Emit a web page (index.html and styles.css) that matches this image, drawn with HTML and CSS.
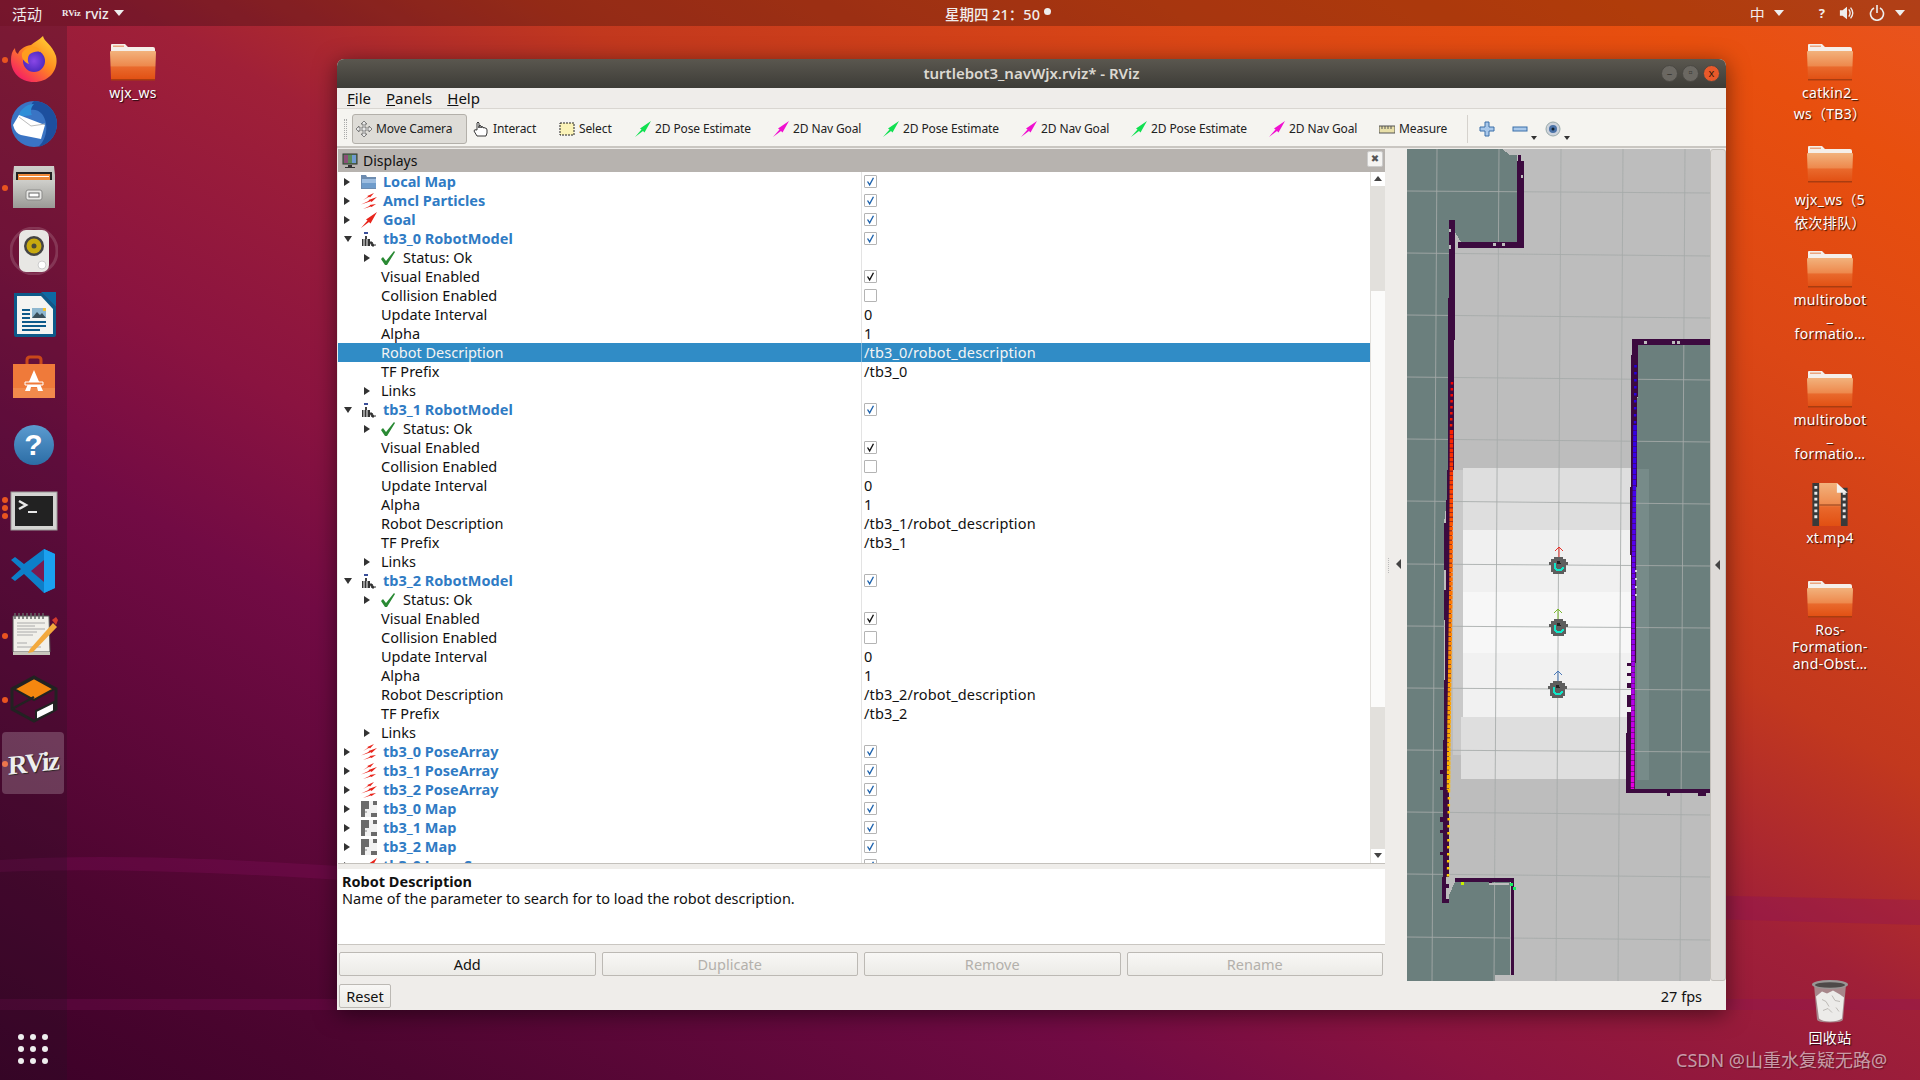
FILE: index.html
```html
<!DOCTYPE html>
<html lang="zh">
<head>
<meta charset="utf-8">
<title>turtlebot3_navWjx.rviz* - RViz</title>
<link rel="stylesheet" href="styles.css">
</head>
<body>
<svg class="defs" width="0" height="0">
  <defs>
    <linearGradient id="gFolder" x1="0" y1="0" x2="0" y2="1"><stop offset="0" stop-color="#f2b27c"/><stop offset=".5" stop-color="#ee8a4e"/><stop offset=".56" stop-color="#e9692c"/><stop offset="1" stop-color="#e14f12"/></linearGradient>
    <linearGradient id="gFire" x1="1" y1="0" x2=".2" y2="1"><stop offset="0" stop-color="#ffe03a"/><stop offset=".5" stop-color="#ff8a1f"/><stop offset="1" stop-color="#f5166a"/></linearGradient>
    <radialGradient id="gGlobe"><stop offset="0" stop-color="#8a47e6"/><stop offset="1" stop-color="#4f2ac0"/></radialGradient>
    <linearGradient id="gGrey" x1="0" y1="0" x2="0" y2="1"><stop offset="0" stop-color="#cfcfcb"/><stop offset="1" stop-color="#9a9a96"/></linearGradient>
    <linearGradient id="gLaserL" gradientUnits="userSpaceOnUse" x1="0" y1="382" x2="0" y2="877"><stop offset="0" stop-color="#f50000"/><stop offset=".3" stop-color="#ff5a00"/><stop offset=".6" stop-color="#ff9a00"/><stop offset="1" stop-color="#ffd500"/></linearGradient>
    <linearGradient id="gLaserR" gradientUnits="userSpaceOnUse" x1="0" y1="365" x2="0" y2="790"><stop offset="0" stop-color="#2000e0"/><stop offset=".4" stop-color="#5000f0"/><stop offset=".65" stop-color="#9500f0"/><stop offset="1" stop-color="#e800e0"/></linearGradient>

    <symbol id="i-folder" viewBox="0 0 46 38">
      <path d="M2 1h13l3 3h25q2 0 2 2v6H1V2q0-1 1-1z" fill="#f5efe9"/>
      <path d="M3 2.500h11v1.500H3z" fill="#eba57f"/>
      <path d="M1 8h44q1 0 1 1l-1 27q0 1-2 1H3q-2 0-2-1L0 9q0-1 1-1z" fill="url(#gFolder)"/>
      <path d="M1 36h44v1.500H1z" fill="#a93c10"/>
    </symbol>
    <symbol id="i-video" viewBox="0 0 36 46">
      <path d="M0 1h7v44H0zM29 6h7v39h-7z" fill="#3a3a3a"/>
      <path d="M7 1h18l4 5v39H7z" fill="url(#gFolder)"/>
      <path d="M25 1l11 10h-11z" fill="#f5f2ee"/>
      <path d="M7 23h22v1H7z" fill="#8c3d18"/>
      <path d="M2 4h3v3H2zm0 6h3v3H2zm0 6h3v3H2zm0 6h3v3H2zm0 6h3v3H2zm0 6h3v3H2zm29-24h3v3h-3zm0 6h3v3h-3zm0 6h3v3h-3zm0 6h3v3h-3zm0 6h3v3h-3z" fill="#e8e8e8"/>
    </symbol>
    <symbol id="i-trash" viewBox="0 0 36 44">
      <path d="M2 5l3 35q0 3 13 3t13-3l3-35z" fill="#a9a09f" opacity=".8"/>
      <path d="M4 17l6-5 5 2 6-3 7 4 4 3-2 21q-4 3-12 3t-11-3z" fill="#ecebe9"/>
      <path d="M10 20l4 2 3 5M20 16l3 5 5 1M11 31l5-2 4 4M24 28l3 4" stroke="#bdbab6" fill="none"/>
      <ellipse cx="18" cy="5" rx="18" ry="4.500" fill="#9a9695"/>
      <ellipse cx="18" cy="5.500" rx="15" ry="2.800" fill="#4e4948"/>
    </symbol>
    <symbol id="t-arrow" viewBox="0 0 16 16"><path d="M0 16L6.500 8.500 5 7.500 16 0 9.500 11.500 8 10z" fill="currentColor"/></symbol>
    <symbol id="t-particles" viewBox="0 0 16 16">
      <path d="M2 7L7 3.800 6.300 3 13 0 9 4.500 8.300 3.800zM0 11.500L8 7.800 7.500 7 16 4 10.500 9 9.800 8.300zM2 16L9 12.800 8.500 12 15 11 10.500 14 9.800 13.400z" fill="#e8251c"/>
    </symbol>
    <symbol id="t-dfolder" viewBox="0 0 16 16">
      <path d="M0 1h5l1 2h9v12H0z" fill="#6d8cb0"/><path d="M1 5h14v9H1z" fill="#9dbde0"/><path d="M1 9h14v5H1z" fill="#6f9ccb"/>
    </symbol>
    <symbol id="t-robot" viewBox="0 0 16 16">
      <path d="M3 1h4v2H3z" fill="#3a4f9a"/><path d="M4 5h2v3H4z" fill="#444"/><path d="M1 8h8v7H1z" fill="#333"/><path d="M3 8v7M6 8v7" stroke="#fff"/><path d="M9 11h2l2 4h-2zM12 14h3" stroke="#333" fill="#333"/>
    </symbol>
    <symbol id="t-map" viewBox="0 0 16 16">
      <path d="M0 0h16v16H0z" fill="#f2f2f2"/>
      <path d="M0 0h4v16H0zM4 0h4v8H4zM12 0h4v4h-4zM10 12h6v4h-6z" fill="#6b6b6b"/>
      <path d="M4 10h2v2H4z" fill="#bbb"/>
    </symbol>
    <symbol id="t-check" viewBox="0 0 16 16"><path d="M1 9l2-2 3 4 8-10 1 1-8 13h-2z" fill="#2a8a34"/></symbol>
    <symbol id="t-tick" viewBox="0 0 13 13"><path d="M3 6.500l2.500 4L10 2" fill="none" stroke="currentColor" stroke-width="1.600"/></symbol>
    <symbol id="t-robotmap" viewBox="0 0 19 18">
      <path d="M2 3h3V1h9v2h3v3h2v3h-2v7h-2v2H4v-2H2V9H0V6h2z" fill="#5e5e5e"/>
      <path d="M6 7v4q0 3 4 3t4-3" fill="none" stroke="#0fe6c8" stroke-width="2"/>
      <path d="M8 5h3l1 3H8z" fill="#222"/>
    </symbol>
  </defs>
</svg>

<div class="topbar">
  <div class="tb-left">
    <span class="tb-act">活动</span>
    <span class="tb-mini">RViz</span>
    <span class="tb-app">rviz</span>
    <i class="caret"></i>
  </div>
  <div class="tb-clock">星期四 21：50<i class="clock-dot"></i></div>
  <div class="tb-right">
    <span class="tb-ime">中</span><i class="caret"></i>
    <span class="tb-help">?</span>
    <svg class="tb-ico" viewBox="0 0 18 16"><path d="M1 5h3l5-4v14l-5-4H1z" fill="#eee"/><path d="M11 4q3 4 0 8M13 2q5 6 0 12" fill="none" stroke="#eee" stroke-width="1.500"/></svg>
    <svg class="tb-ico last" viewBox="0 0 16 16"><path d="M5 3a6.500 6.500 0 1 0 6 0" fill="none" stroke="#eee" stroke-width="1.600"/><path d="M8 0v8" stroke="#eee" stroke-width="1.600"/></svg>
    <i class="caret"></i>
  </div>
</div>

<nav class="dock">
  <div class="slot run"><svg class="app" viewBox="0 0 48 48"><path d="M33 1c1 6 9 8 13 20 3 13-6 26-22 26C10 47 1 37 1 25c0-5 1-9 4-12 0 3 1 5 3 6 1-4 6-8 13-9 3-3 8-5 12-9z" fill="url(#gFire)"/><circle cx="24" cy="26" r="11" fill="url(#gGlobe)"/><path d="M12 18c3-5 10-8 16-5 2 1 3 3 2 4-3-1-7 0-10 2-2 2-3 6-1 10-5-2-8-6-7-11z" fill="#ff9d1e"/></svg></div>
  <div class="slot"><svg class="app" viewBox="0 0 48 48"><circle cx="24" cy="25" r="23" fill="#3a74c4"/><path d="M24 2a23 23 0 0 1 23 23c0 12-9 21-19 23 8-6 12-22 4-33-3-4-8-5-12-4 1-5 2-8 4-9z" fill="#1d4f9e"/><path d="M8 18c2-7 8-13 16-13-3 3-4 8-2 11z" fill="#2f8fd8"/><path d="M3 26l6-10 26 10-4 14-20-4q-6-2-8-10z" fill="#fff"/><path d="M9 18l12 9 14-2" fill="none" stroke="#bbb"/></svg></div>
  <div class="slot run"><svg class="app" viewBox="0 0 48 48"><path d="M4 3h40l1 9v33H3V12z" fill="url(#gGrey)"/><path d="M6 9h36v8H6z" fill="#222"/><path d="M8 11h32v6H8z" fill="#ee8a3a"/><path d="M9 13h30v1H9z" fill="#fff"/><path d="M3 17h42v28H3z" fill="url(#gGrey)"/><rect x="16" y="27" width="16" height="10" rx="2" fill="#e8e8e6" stroke="#8a8a88"/><rect x="19" y="30" width="10" height="4" fill="#fff" stroke="#666"/></svg></div>
  <div class="slot"><svg class="app" viewBox="0 0 48 48"><circle cx="24" cy="24" r="23" fill="none" stroke="#fff" stroke-opacity=".15" stroke-width="3"/><rect x="9" y="3" width="30" height="42" rx="7" fill="#e8e7e4"/><circle cx="24" cy="19" r="10" fill="#444"/><circle cx="24" cy="19" r="7.500" fill="#c7a90f"/><circle cx="24" cy="19" r="2.500" fill="#4a4a3a"/><circle cx="32" cy="38" r="4" fill="#fff" stroke="#ccc"/></svg></div>
  <div class="slot"><svg class="app" viewBox="0 0 48 48"><path d="M4 2h28l14 14v28q0 2-2 2H6q-2 0-2-2z" fill="#0d5a8a"/><path d="M31 1h15v15z" fill="#0d6aa3"/><path d="M7 5h24l12 13v25H7z" fill="#f4f4f2"/><path d="M12 18h8v2h-8zm0 4h8v2h-8zm0 4h8v2h-8zm0 4h24v2H12zm0 4h24v2H12zm0 4h18v2H12z" fill="#0d5a8a"/><path d="M22 17h14v10H22z" fill="#8fb7cf"/><path d="M22 27l5-6 3 3 2-2 4 5z" fill="#3a4f5a"/><path d="M33 17h3v3h-3z" fill="#f0c030"/></svg></div>
  <div class="slot"><svg class="app" viewBox="0 0 48 48"><path d="M17 11V5q0-3 3-3h8q3 0 3 3v6" fill="none" stroke="#c9481a" stroke-width="3"/><path d="M3 9h42v34H3z" fill="#ef7a3a"/><path d="M3 33h42v10H3z" fill="#f28a4c"/><path d="M24 15l9 21h-5l-1-4h-6l-1 4h-5z" fill="#fff"/><path d="M15 27h18v3H15z" fill="#ef7a3a" stroke="#fff"/></svg></div>
  <div class="slot"><div class="help-ball">?</div></div>
  <div class="slot run3"><svg class="app" viewBox="0 -6 48 48"><rect x="1" y="3" width="46" height="38" fill="#d4d4d2" stroke="#9a9a98"/><rect x="5" y="7" width="38" height="30" fill="#222"/><path d="M9 12l7 4-7 4" fill="none" stroke="#e8e8e8" stroke-width="2.500"/><path d="M18 22h9v2h-9z" fill="#e8e8e8"/></svg></div>
  <div class="slot"><svg class="app" viewBox="0 0 48 48"><path d="M34 2l11 5v34l-11 5-20-19-9 7-4-3 10-9L1 13l4-3 9 7z" fill="#0d7fc9"/><path d="M34 2l11 5v34l-11 5z" fill="#1ba1f0"/><path d="M34 13v22l-13-11z" fill="#7a1a50"/></svg></div>
  <div class="slot run"><svg class="app" viewBox="0 0 48 48"><path d="M3 5h36l1 36H3z" fill="#f1f0ea" stroke="#555"/><path d="M3 41h37v3H3z" fill="#c8c6bc"/><path d="M5 2v6m4-6v6m4-6v6m4-6v6m4-6v6m4-6v6m4-6v6m4-6v6" stroke="#666" stroke-width="1.500"/><path d="M7 12h28M7 15h18M7 18h28M7 21h20M7 24h16M7 32h10M7 36h24" stroke="#aaa" stroke-width="1"/><path d="M20 38l23-26 4 4-24 25-5 1z" fill="#f2a93c"/><path d="M42 9l4-3 2 3-2 5z" fill="#d23a2e"/></svg></div>
  <div class="slot run"><svg class="app" viewBox="0 0 48 48"><path d="M24 2L46 14v20L24 46 2 34V14z" fill="none" stroke="#222" stroke-width="3"/><path d="M24 3l20 11-20 11L4 14z" fill="#f5870f" stroke="#222" stroke-width="2"/><path d="M2 34l22-12" stroke="#222" stroke-width="2.500"/><path d="M26 36l18-9v9l-18 9z" fill="#fff" stroke="#222" stroke-width="2"/></svg></div>
  <div class="slot run active"><span class="rviz-logo">RViz</span></div>
  <div class="apps"><i></i><i></i><i></i><i></i><i></i><i></i><i></i><i></i><i></i></div>
</nav>

<svg class="waves" viewBox="0 0 1920 1080" aria-hidden="true">
  <path d="M0 860Q120 852 340 866L1920 900V925L340 880Q120 866 0 872z" fill="#8a1060" opacity=".28"/>
  <path d="M0 999h1920v11H0z" fill="#8a1060" opacity=".25"/>
</svg>

<div class="ficon d-wjx"><svg class="fold"><use href="#i-folder"/></svg><span>wjx_ws</span></div>
<div class="ficon d-cat"><svg class="fold"><use href="#i-folder"/></svg><span>catkin2_<br>ws（TB3）</span></div>
<div class="ficon d-wjx5"><svg class="fold"><use href="#i-folder"/></svg><span>wjx_ws（5<br>依次排队）</span></div>
<div class="ficon d-multi1"><svg class="fold"><use href="#i-folder"/></svg><span class="tight">multirobot<br>_<br>formatio…</span></div>
<div class="ficon d-multi2"><svg class="fold"><use href="#i-folder"/></svg><span class="tight">multirobot<br>_<br>formatio…</span></div>
<div class="ficon d-xt"><svg class="vid"><use href="#i-video"/></svg><span>xt.mp4</span></div>
<div class="ficon d-ros"><svg class="fold"><use href="#i-folder"/></svg><span class="tight">Ros-<br>Formation-<br>and-Obst…</span></div>
<div class="ficon d-trash"><svg class="vid"><use href="#i-trash"/></svg><span>回收站</span></div>
<div class="watermark">CSDN @山重水复疑无路@</div>

<main class="win">
  <header class="titlebar">
    <span class="title">turtlebot3_navWjx.rviz* - RViz</span>
    <div class="wbtns"><i class="wb">–</i><i class="wb">▫</i><i class="wb close">x</i></div>
  </header>
  <div class="menubar"><span><u>F</u>ile</span><span><u>P</u>anels</span><span><u>H</u>elp</span></div>
  <div class="toolbar">
    <i class="grip"></i>
    <div class="tool pressed"><svg class="tico" viewBox="0 0 16 16"><path d="M8 0l3 3H9v4h4V5l3 3-3 3V9H9v4h2l-3 3-3-3h2V9H3v2L0 8l3-3v2h4V3H5z" fill="#e8e8e8" stroke="#666" stroke-width=".8"/></svg><span class="w-move">Move Camera</span></div>
    <div class="tool"><svg class="tico" viewBox="0 0 16 16"><path d="M4 9V2q1-2 2 0v5V5q1-1.500 2 0v2-1q1-1 2 0v1q1-1 2 0q2 0 2 2v3l-1 3H4L1 10q0-2 3-1z" fill="#fff" stroke="#222" stroke-width=".9"/></svg><span class="w-interact">Interact</span></div>
    <div class="tool"><svg class="tico" viewBox="0 0 16 16"><rect x="1" y="2" width="14" height="12" fill="#fbf3b8" stroke="#222" stroke-dasharray="2 1"/></svg><span class="w-select">Select</span></div>
    <div class="tool green"><svg class="tico"><use href="#t-arrow"/></svg><span class="w-pose">2D Pose Estimate</span></div>
    <div class="tool pink"><svg class="tico"><use href="#t-arrow"/></svg><span class="w-nav">2D Nav Goal</span></div>
    <div class="tool green"><svg class="tico"><use href="#t-arrow"/></svg><span class="w-pose">2D Pose Estimate</span></div>
    <div class="tool pink"><svg class="tico"><use href="#t-arrow"/></svg><span class="w-nav">2D Nav Goal</span></div>
    <div class="tool green"><svg class="tico"><use href="#t-arrow"/></svg><span class="w-pose">2D Pose Estimate</span></div>
    <div class="tool pink"><svg class="tico"><use href="#t-arrow"/></svg><span class="w-nav">2D Nav Goal</span></div>
    <div class="tool"><svg class="tico" viewBox="0 0 16 16"><rect y="5" width="16" height="7" fill="#e8dfa8" stroke="#555"/><path d="M3 5v3M6 5v3M9 5v3M12 5v3" stroke="#555"/></svg><span class="w-measure">Measure</span></div>
    <i class="tsep"></i>
    <div class="tbtn"><svg class="tico" viewBox="0 0 16 16"><path d="M6 1h4v5h5v4h-5v5H6v-5H1V6h5z" fill="#a9c8ea" stroke="#3a6ea8"/></svg></div>
    <div class="tbtn drop"><svg class="tico" viewBox="0 0 16 16"><rect x="1" y="6" width="14" height="4" fill="#a9c8ea" stroke="#3a6ea8"/></svg></div>
    <div class="tbtn drop"><svg class="tico" viewBox="0 0 16 16"><circle cx="8" cy="8" r="7" fill="#cdd3dc" stroke="#9aa"/><circle cx="8" cy="8" r="4" fill="#4b73a8"/><circle cx="8" cy="8" r="1.500" fill="#123"/></svg></div>
  </div>

  <div class="main">
    <section class="left">
      <div class="phead"><svg class="mon" viewBox="0 0 16 16"><rect x="1" y="1" width="14" height="10" fill="#5b8a5a" stroke="#333"/><path d="M2 2h4v8H2z" fill="#8d4f7a"/><path d="M10 2h4v8h-4z" fill="#6f9ad0"/><path d="M6 12h4v2h3v1H3v-1h3z" fill="#333"/></svg><span>Displays</span><b class="pclose">✖</b></div>
      <div class="treewrap">
        <div class="tree">
          <div class="row"><div class="nm"><i class="tw"></i><svg class="ic"><use href="#t-dfolder"/></svg><span class="disp">Local Map</span></div><div class="val"><i class="cb blue"><svg><use href="#t-tick"/></svg></i></div></div>
          <div class="row"><div class="nm"><i class="tw"></i><svg class="ic"><use href="#t-particles"/></svg><span class="disp">Amcl Particles</span></div><div class="val"><i class="cb blue"><svg><use href="#t-tick"/></svg></i></div></div>
          <div class="row"><div class="nm"><i class="tw"></i><svg class="ic red"><use href="#t-arrow"/></svg><span class="disp">Goal</span></div><div class="val"><i class="cb blue"><svg><use href="#t-tick"/></svg></i></div></div>

          <div class="row"><div class="nm"><i class="tw open"></i><svg class="ic"><use href="#t-robot"/></svg><span class="disp">tb3_0 RobotModel</span></div><div class="val"><i class="cb blue"><svg><use href="#t-tick"/></svg></i></div></div>
          <div class="row"><div class="nm sub"><i class="tw"></i><svg class="ic ck"><use href="#t-check"/></svg><span class="stat">Status: Ok</span></div><div class="val"></div></div>
          <div class="row"><div class="nm leaf">Visual Enabled</div><div class="val"><i class="cb"><svg><use href="#t-tick"/></svg></i></div></div>
          <div class="row"><div class="nm leaf">Collision Enabled</div><div class="val"><i class="cb"></i></div></div>
          <div class="row"><div class="nm leaf">Update Interval</div><div class="val">0</div></div>
          <div class="row"><div class="nm leaf">Alpha</div><div class="val">1</div></div>
          <div class="row sel"><div class="nm leaf">Robot Description</div><div class="val">/tb3_0/robot_description</div></div>
          <div class="row"><div class="nm leaf">TF Prefix</div><div class="val">/tb3_0</div></div>
          <div class="row"><div class="nm sub"><i class="tw"></i><span class="lnk">Links</span></div><div class="val"></div></div>

          <div class="row"><div class="nm"><i class="tw open"></i><svg class="ic"><use href="#t-robot"/></svg><span class="disp">tb3_1 RobotModel</span></div><div class="val"><i class="cb blue"><svg><use href="#t-tick"/></svg></i></div></div>
          <div class="row"><div class="nm sub"><i class="tw"></i><svg class="ic ck"><use href="#t-check"/></svg><span class="stat">Status: Ok</span></div><div class="val"></div></div>
          <div class="row"><div class="nm leaf">Visual Enabled</div><div class="val"><i class="cb"><svg><use href="#t-tick"/></svg></i></div></div>
          <div class="row"><div class="nm leaf">Collision Enabled</div><div class="val"><i class="cb"></i></div></div>
          <div class="row"><div class="nm leaf">Update Interval</div><div class="val">0</div></div>
          <div class="row"><div class="nm leaf">Alpha</div><div class="val">1</div></div>
          <div class="row"><div class="nm leaf">Robot Description</div><div class="val">/tb3_1/robot_description</div></div>
          <div class="row"><div class="nm leaf">TF Prefix</div><div class="val">/tb3_1</div></div>
          <div class="row"><div class="nm sub"><i class="tw"></i><span class="lnk">Links</span></div><div class="val"></div></div>

          <div class="row"><div class="nm"><i class="tw open"></i><svg class="ic"><use href="#t-robot"/></svg><span class="disp">tb3_2 RobotModel</span></div><div class="val"><i class="cb blue"><svg><use href="#t-tick"/></svg></i></div></div>
          <div class="row"><div class="nm sub"><i class="tw"></i><svg class="ic ck"><use href="#t-check"/></svg><span class="stat">Status: Ok</span></div><div class="val"></div></div>
          <div class="row"><div class="nm leaf">Visual Enabled</div><div class="val"><i class="cb"><svg><use href="#t-tick"/></svg></i></div></div>
          <div class="row"><div class="nm leaf">Collision Enabled</div><div class="val"><i class="cb"></i></div></div>
          <div class="row"><div class="nm leaf">Update Interval</div><div class="val">0</div></div>
          <div class="row"><div class="nm leaf">Alpha</div><div class="val">1</div></div>
          <div class="row"><div class="nm leaf">Robot Description</div><div class="val">/tb3_2/robot_description</div></div>
          <div class="row"><div class="nm leaf">TF Prefix</div><div class="val">/tb3_2</div></div>
          <div class="row"><div class="nm sub"><i class="tw"></i><span class="lnk">Links</span></div><div class="val"></div></div>

          <div class="row"><div class="nm"><i class="tw"></i><svg class="ic"><use href="#t-particles"/></svg><span class="disp">tb3_0 PoseArray</span></div><div class="val"><i class="cb blue"><svg><use href="#t-tick"/></svg></i></div></div>
          <div class="row"><div class="nm"><i class="tw"></i><svg class="ic"><use href="#t-particles"/></svg><span class="disp">tb3_1 PoseArray</span></div><div class="val"><i class="cb blue"><svg><use href="#t-tick"/></svg></i></div></div>
          <div class="row"><div class="nm"><i class="tw"></i><svg class="ic"><use href="#t-particles"/></svg><span class="disp">tb3_2 PoseArray</span></div><div class="val"><i class="cb blue"><svg><use href="#t-tick"/></svg></i></div></div>
          <div class="row"><div class="nm"><i class="tw"></i><svg class="ic"><use href="#t-map"/></svg><span class="disp">tb3_0 Map</span></div><div class="val"><i class="cb blue"><svg><use href="#t-tick"/></svg></i></div></div>
          <div class="row"><div class="nm"><i class="tw"></i><svg class="ic"><use href="#t-map"/></svg><span class="disp">tb3_1 Map</span></div><div class="val"><i class="cb blue"><svg><use href="#t-tick"/></svg></i></div></div>
          <div class="row"><div class="nm"><i class="tw"></i><svg class="ic"><use href="#t-map"/></svg><span class="disp">tb3_2 Map</span></div><div class="val"><i class="cb blue"><svg><use href="#t-tick"/></svg></i></div></div>
          <div class="row"><div class="nm"><i class="tw"></i><svg class="ic red"><use href="#t-arrow"/></svg><span class="disp">tb3_0 LaserScan</span></div><div class="val"><i class="cb blue"><svg><use href="#t-tick"/></svg></i></div></div>
        </div>
        <div class="sbar"><i class="sb-up"></i><i class="sb-gut g1"></i><i class="sb-thumb"></i><i class="sb-gut g2"></i><i class="sb-down"></i></div>
      </div>
      <div class="hsplit"></div>
      <div class="helpbox"><b>Robot Description</b><span>Name of the parameter to search for to load the robot description.</span></div>
      <div class="btnrow"><button>Add</button><button class="off">Duplicate</button><button class="off">Remove</button><button class="off">Rename</button></div>
      <div class="resetrow"><button>Reset</button></div>
    </section>

    <section class="right">
      <div class="viewrow">
        <div class="vsplit"><i class="dots"></i><i class="la"></i></div>
        <svg class="map" viewBox="1407 149 303 832" shape-rendering="crispEdges">
          <rect x="1407" y="149" width="303" height="832" fill="#bdbdbd"/>
          <rect x="1453" y="470" width="11" height="285" fill="#c9c9c9"/>
          <rect x="1463" y="468" width="171" height="62" fill="#dedede"/>
          <rect x="1463" y="530" width="171" height="62" fill="#f0f0f0"/>
          <rect x="1463" y="592" width="171" height="61" fill="#f7f7f7"/>
          <rect x="1463" y="653" width="171" height="64" fill="#f1f1f1"/>
          <rect x="1461" y="717" width="173" height="62" fill="#dedede"/>
          <path d="M1407 149H1502L1510 155H1517V242H1461L1455 232 1449 220V300H1448V470L1447 500 1444 523V877H1442V903H1449V895L1455 882H1510V975H1495V981H1407z" fill="#6b7f7d"/>
          <path d="M1638 345H1710V789H1628V733H1632L1634 600 1636 500 1637 400 1638 397z" fill="#6b7f7d"/>
          <rect x="1637" y="469" width="12" height="311" fill="#778b89"/>
          <g shape-rendering="auto" stroke="#a6aaa9" stroke-opacity=".85" stroke-width="1" fill="none">
            <path d="M1407 191l303 2M1407 253l303 3M1407 315l303 3M1407 377l303 3M1407 439l303 3M1407 501l303 3M1407 564l303 2M1407 626l303 2M1407 688l303 2M1407 750l303 2M1407 812l303 3M1407 874l303 3M1407 937l303 3"/>
            <path d="M1437 149l-5 832M1499 149l-5 832M1561 149l-5 832M1623 149l-5 832M1685 149l-5 832"/>
          </g>
          <!-- occupied cells: top-left room -->
          <g fill="#3c0a3f">
            <rect x="1518" y="155" width="3" height="6"/>
            <rect x="1517" y="161" width="7" height="87"/>
            <rect x="1458" y="242" width="66" height="6"/>
            <rect x="1449" y="220" width="6" height="78"/>
            <rect x="1448" y="298" width="7" height="42"/>
            <rect x="1448" y="340" width="6" height="130"/>
            <rect x="1447" y="470" width="6" height="30"/>
            <rect x="1446" y="500" width="7" height="23"/>
            <rect x="1444" y="523" width="8" height="47"/>
            <rect x="1446" y="570" width="5" height="20"/>
            <rect x="1444" y="590" width="7" height="30"/>
            <rect x="1445" y="620" width="6" height="60"/>
            <rect x="1444" y="680" width="6" height="60"/>
            <rect x="1443" y="740" width="6" height="137"/>
            <rect x="1440" y="770" width="4" height="4"/>
            <rect x="1440" y="787" width="4" height="3"/>
            <rect x="1440" y="817" width="4" height="5"/>
            <rect x="1440" y="830" width="4" height="3"/>
            <rect x="1440" y="852" width="4" height="3"/>
            <rect x="1442" y="877" width="4" height="26"/>
            <rect x="1442" y="899" width="7" height="4"/>
            <rect x="1446" y="884" width="3" height="4"/>
            <rect x="1455" y="878" width="58" height="4"/>
            <rect x="1511" y="878" width="3" height="97"/>
            <rect x="1489" y="882" width="3" height="3"/>
            <!-- right room -->
            <rect x="1632" y="339" width="78" height="6"/>
            <rect x="1632" y="339" width="6" height="16"/>
            <rect x="1631" y="355" width="7" height="42"/>
            <rect x="1631" y="397" width="6" height="90"/>
            <rect x="1630" y="487" width="6" height="68"/>
            <rect x="1631" y="555" width="5" height="108"/>
            <rect x="1631" y="663" width="4" height="130"/>
            <rect x="1627" y="663" width="4" height="3"/>
            <rect x="1627" y="673" width="4" height="3"/>
            <rect x="1627" y="683" width="4" height="5"/>
            <rect x="1627" y="695" width="4" height="12"/>
            <rect x="1627" y="712" width="4" height="21"/>
            <rect x="1626" y="733" width="6" height="59"/>
            <rect x="1626" y="789" width="84" height="4"/>
            <rect x="1667" y="793" width="3" height="3"/>
            <rect x="1698" y="793" width="8" height="3"/>
          </g>
          <path d="M1489 883h20v2h-20zM1449 229h2v3h-2zM1449 245h2v4h-2zM1493 243h3v3h-3zM1502 243h3v3h-3zM1521 175h2v3h-2zM1644 341h3v3h-3zM1672 341h3v3h-3zM1677 341h3v3h-3z" fill="#bdbdbd"/>
          <g shape-rendering="auto" fill="none" stroke-width="2.500">
            <path d="M1452 382l-1 48" stroke="url(#gLaserL)" stroke-dasharray="2.500 3.500"/>
            <path d="M1451.500 430l-.5 150-2 150-.5 60" stroke="url(#gLaserL)" stroke-width="3.500" stroke-dasharray="4 .6"/>
            <path d="M1449 790l-1 87" stroke="url(#gLaserL)" stroke-dasharray="2.500 4.500"/>
            <path d="M1635.500 365l-.5 60" stroke="url(#gLaserR)" stroke-dasharray="2.500 4.500"/>
            <path d="M1635 425l-1.500 150-1 214" stroke="url(#gLaserR)" stroke-width="3.500" stroke-dasharray="5 .5"/>
            <path d="M1636 570v30" stroke="#fff" stroke-width="1.500" stroke-dasharray="2 6"/>
          </g>
          <path d="M1461 882h3v3h-3z" fill="#c8f000"/><path d="M1510 883h3v3h-3zM1513 887h3v3h-3z" fill="#18f060"/>
          <g shape-rendering="auto" fill="none" stroke-width="1">
            <path d="M1559 557v-10m-4 4l4-4 4 4" stroke="#e8302a"/>
            <path d="M1558 619v-10m-4 4l4-4 4 4" stroke="#7ab82e"/>
            <path d="M1558 681v-10m-4 4l4-4 4 4" stroke="#4a78b8"/>
          </g>
          <use href="#t-robotmap" x="1549" y="556" width="19" height="18"/>
          <use href="#t-robotmap" x="1549" y="618" width="19" height="18"/>
          <use href="#t-robotmap" x="1548" y="680" width="19" height="18"/>
        </svg>
        <div class="rhandle"><i class="la"></i></div>
      </div>
      <div class="status"><span>27 fps</span></div>
    </section>
  </div>
</main>
</body>
</html>
```
FILE: styles.css
```css
* { box-sizing: border-box; }
html, body { margin: 0; height: 100%; }
body {
  width: 1920px; height: 1080px; overflow: hidden; position: relative;
  font-family: "Noto Sans", "Noto Sans CJK SC", sans-serif; font-size: 14px; color: #111;
  background: linear-gradient(to top right, #3c0128 0%, #4d0530 11%, #720b44 30%, #8a1340 39%, #a02038 53%, #c2381e 64%, #dc4715 80%, #e84f0e 92%, #e95420 100%);
}
i { font-style: normal; display: block; }
.defs { position: absolute; }
.waves { position: absolute; inset: 0; width: 1920px; height: 1080px; }

/* Top bar */
.topbar {
  position: absolute; top: 0; left: 0; right: 0; height: 26px; z-index: 3;
  display: flex; align-items: center; background: rgba(0,0,0,.24); color: #f0ecec;
}
.tb-left { display: flex; align-items: center; flex: 0 0 945px; padding-left: 12px; }
.tb-act { width: 50px; font-size: 15px; }
.tb-mini { width: 23px; font: bold 9px "Liberation Serif", serif; }
.tb-app { font-weight: 500; width: 29px; }
.caret { width: 0; height: 0; border: 5px solid transparent; border-top: 6px solid #eee; border-bottom: 0; }
.tb-clock { display: flex; align-items: center; gap: 4px; font-weight: 500; font-size: 14.500px; flex: 0 0 110px; }
.clock-dot { width: 7px; height: 7px; border-radius: 50%; background: #eee; margin-top: -3px; }
.tb-right { display: flex; align-items: center; margin-left: auto; padding-right: 15px; }
.tb-ime { font-size: 15px; margin-right: 9px; }
.tb-help { margin-left: 35px; font-weight: bold; font-size: 13px; }
.tb-ico { width: 16px; height: 16px; margin-left: 14px; }
.tb-ico.last { margin-right: 10px; }

/* Dock */
.dock {
  position: absolute; left: 0; top: 26px; bottom: 0; width: 67px; z-index: 2; padding-top: 1px;
  background: rgba(35,20,35,.26); display: flex; flex-direction: column;
}
.slot { height: 64px; flex: none; display: flex; align-items: center; justify-content: center; position: relative; }
.app { width: 48px; height: 48px; }
.slot.run::before { content: ""; position: absolute; left: 2px; top: 30px; width: 6px; height: 6px; border-radius: 50%; background: #e95420; }
.slot.run3::before { content: ""; position: absolute; left: 2px; top: 22px; width: 6px; height: 6px; border-radius: 50%; background: #e95420; box-shadow: 0 8px #e95420, 0 16px #e95420; }
.slot.active::after { content: ""; position: absolute; left: 2px; top: 1px; width: 62px; height: 62px; border-radius: 4px; background: rgba(255,255,255,.2); }
.help-ball { width: 40px; height: 40px; margin-top: 4px; border-radius: 50%; background: linear-gradient(#5b9bd0, #2c6da5); color: #fff; font: bold 30px/40px "Liberation Sans", sans-serif; text-align: center; }
.rviz-logo { font: bold 27px "Liberation Serif", serif; color: #eee; letter-spacing: -1.500px; transform: skewY(-6deg); text-shadow: 1px 1px 1px #222; position: relative; z-index: 1; }
.apps { margin-top: auto; margin-bottom: 16px; margin-left: 18px; width: 36px; display: grid; grid-template-columns: repeat(3, 6px); gap: 6px; }
.apps i { width: 6px; height: 6px; border-radius: 50%; background: #eee; }

/* Desktop icons */
.ficon { position: absolute; width: 92px; display: flex; flex-direction: column; align-items: center; color: #fff; text-align: center; font-size: 14px; line-height: 21px; letter-spacing: .3px; text-shadow: 1px 1px 1px rgba(0,0,0,.75); z-index: 1; }
.fold { width: 46px; height: 38px; }
.vid { width: 36px; height: 45px; }
.ficon span { margin-top: 1px; }
.ficon .tight { line-height: 17px; margin-top: 3px; }
.d-wjx { left: 87px; top: 43px; }
.d-cat { left: 1784px; top: 43px; }
.d-wjx5 { left: 1784px; top: 145px; }
.d-wjx5 span { margin-top: 5px; line-height: 23px; }
.d-multi1 { left: 1784px; top: 250px; }
.d-multi2 { left: 1784px; top: 370px; }
.d-xt { left: 1784px; top: 482px; }
.d-xt span { margin-top: 0; }
.d-ros { left: 1784px; top: 580px; }
.d-trash { left: 1784px; top: 979px; }
.d-trash span { margin-top: 3px; }
.watermark { position: absolute; left: 1676px; top: 1047px; font-size: 18px; line-height: 26px; color: rgba(255,255,255,.58); text-shadow: 1px 1px 1px rgba(0,0,0,.35); z-index: 1; white-space: nowrap; }

/* Window */
.win {
  position: absolute; left: 337px; top: 59px; width: 1389px; height: 951px; z-index: 2;
  display: flex; flex-direction: column; background: #efedea; border-radius: 7px 7px 0 0;
  box-shadow: 0 4px 22px rgba(0,0,0,.5);
}
.titlebar { height: 29px; flex: none; padding-bottom: 2px; background: linear-gradient(#5a574f, #3d3c37); border-radius: 7px 7px 0 0; position: relative; display: flex; align-items: center; justify-content: center; }
.title { color: #dcd9d2; font-weight: 600; font-size: 15px; }
.wbtns { position: absolute; right: 6px; top: 6px; display: flex; gap: 4px; }
.wb { width: 17px; height: 17px; border-radius: 50%; background: #6b6862; border: 1px solid #4a4843; color: #3a3934; font-size: 11px; line-height: 14px; text-align: center; }
.wb.close { background: #e9592a; color: #3a1a08; }
.menubar { height: 21px; flex: none; display: flex; align-items: center; gap: 15px; padding-left: 10px; background: #efedea; font-size: 15px; border-bottom: 1px solid #d9d6d1; }
.toolbar { height: 39px; flex: none; display: flex; align-items: center; padding: 2px 0 0 7px; background: #f5f4f0; border-bottom: 2px solid #c9c6c1; font-size: 12px; letter-spacing: -.12px; color: #222; }
.grip { width: 3px; height: 20px; border-left: 1px dotted #aaa; border-right: 1px dotted #aaa; margin-right: 5px; }
.tool { display: flex; align-items: center; gap: 4px; height: 30px; padding: 0 11px; white-space: nowrap; }
.tool.pressed { width: 115px; padding: 0 3px; background: #dedcd7; border: 1px solid #b3b0aa; border-radius: 3px; margin-right: -5px; }
.tool.green .tico { color: #10e050; }
.tool.pink .tico { color: #f010d0; }
.tico { width: 16px; height: 16px; flex: none; }
.w-move { width: 76px; } .w-interact { width: 44px; } .w-select { width: 34px; } .w-pose { width: 96px; } .w-nav { width: 68px; } .w-measure { width: 46px; }
.tsep { width: 1px; height: 28px; background: #d5d2cd; margin: 0 11px; }
.tbtn { width: 33px; height: 30px; display: flex; align-items: center; position: relative; }
.tbtn.drop::after { content: ""; position: absolute; left: 19px; top: 22px; border: 3px solid transparent; border-top: 4px solid #333; border-bottom: 0; }

.main { flex: 1; display: flex; min-height: 0; }
.left { width: 1048px; flex: none; display: flex; flex-direction: column; padding: 1px 0 0 1px; }
.phead { height: 23px; flex: none; display: flex; align-items: center; gap: 5px; background: #b7b3af; padding-left: 4px; position: relative; font-size: 14px; }
.mon { width: 16px; height: 16px; }
.pclose { position: absolute; right: 2px; top: 2px; width: 16px; height: 16px; border-radius: 2px; background: #f5f4f2; border: 1px solid #ccc; font: bold 10px/14px "DejaVu Sans", sans-serif; text-align: center; color: #555; }
.treewrap { height: 691px; flex: none; display: flex; background: #fff; }
.tree { width: 1032px; flex: none; overflow: hidden; }
.row { height: 19px; display: grid; grid-template-columns: 523px 1fr; line-height: 19px; font-size: 14.500px; }
.nm { display: flex; align-items: center; padding-left: 6px; white-space: nowrap; }
.nm.sub { padding-left: 26px; }
.nm.leaf { padding-left: 43px; }
.tw { width: 6px; height: 0; border: solid transparent; border-width: 4px 0 4px 6px; border-left-color: #333; flex: none; }
.tw.open { width: 8px; margin-right: -2px; border-width: 6px 4px 0 4px; border-color: #333 transparent transparent; }
.ic { width: 16px; height: 16px; flex: none; margin-left: 11px; }
.ic.red { color: #e8251c; }
.ic.ck { margin-left: 10px; }
.disp { color: #2f7bc4; font-weight: 700; margin-left: 6px; }
.stat { margin-left: 7px; }
.lnk { margin-left: 11px; }
.val { border-left: 1px solid #e3e3e3; padding-left: 2px; display: flex; align-items: center; letter-spacing: .15px; }
.cb { width: 13px; height: 13px; border: 1px solid #b4b4b4; border-radius: 1px; background: #fff; color: #111; }
.cb svg { display: block; width: 11px; height: 11px; }
.cb.blue { color: #1d62ad; }
.row.sel { background: #308cc6; color: #f4f4f4; }
.row.sel .val { border-left-color: #7fb6da; }
.sbar { flex: 1; display: flex; flex-direction: column; background: #efedea; border-left: 1px solid #e2e0dc; }
.sb-up, .sb-down { height: 14px; flex: none; position: relative; background: #fff; }
.sb-up::after, .sb-down::after { content: ""; position: absolute; left: 3px; top: 4px; border: 4px solid transparent; border-top: 0; border-bottom: 5px solid #444; }
.sb-down::after { border-bottom: 0; border-top: 5px solid #444; }
.sb-gut { background: #e2e0dc; }
.g1 { height: 104px; } .g2 { height: 141px; }
.sb-thumb { flex: 1; background: #fbfbfa; border: 1px solid #e2e0dc; border-width: 1px 0; }
.hsplit { height: 6px; flex: none; background: #efedea; border-top: 1px solid #c4c1bc; }
.helpbox { height: 76px; flex: none; background: #fff; border-bottom: 1px solid #c9c6c1; padding: 4px 0 0 4px; display: flex; flex-direction: column; font-size: 14.500px; line-height: 17px; }
.helpbox b { font-weight: 700; }
.btnrow { display: flex; gap: 6px; padding: 7px 2px 0 1px; height: 32px; flex: none; }
button { font: 14.500px "Noto Sans", sans-serif; height: 24px; padding: 0; background: linear-gradient(#f8f7f5, #ecebe7); border: 1px solid #bcb9b4; border-radius: 2px; color: #111; }
.btnrow button { width: 257px; }
button.off { color: #b3b0ab; }
.resetrow { padding: 7px 0 0 1px; }
.resetrow button { width: 52px; }

.right { flex: 1; display: flex; flex-direction: column; min-width: 0; padding-top: 1px; }
.viewrow { height: 832px; flex: none; display: flex; }
.vsplit { width: 22px; flex: none; position: relative; }
.vsplit .dots { position: absolute; left: 3px; top: 409px; height: 15px; border-left: 1px dotted #bbb; }
.la { width: 0; height: 0; border: solid transparent; border-width: 5px 5px 5px 0; border-right-color: #444; }
.vsplit .la { position: absolute; left: 11px; top: 410px; }
.map { width: 303px; height: 832px; flex: none; display: block; }
.rhandle { flex: 1; background: #dedbd8; border: 1px solid #c3c0bb; border-radius: 3px; position: relative; }
.rhandle .la { position: absolute; left: 4px; top: 410px; }
.status { height: 29px; flex: none; display: flex; align-items: center; justify-content: flex-end; padding-right: 24px; font-size: 14.500px; color: #111; }
```
